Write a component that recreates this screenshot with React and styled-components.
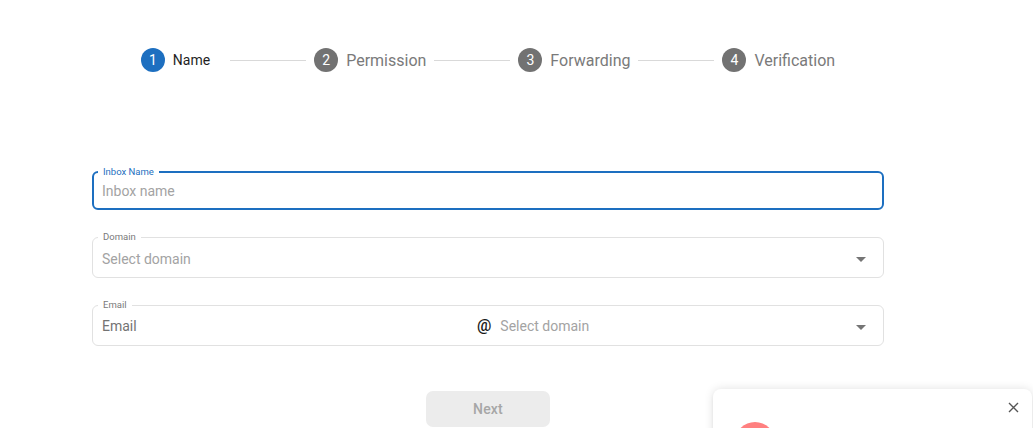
import React from "react";
import styled, { createGlobalStyle } from "styled-components";

const Global = createGlobalStyle`
  html, body { margin: 0; padding: 0; background: #fff; }
  body { font-family: Roboto, "Noto Sans", Arial, sans-serif; overflow: hidden; }
  * { box-sizing: border-box; }
`;

const Page = styled.div`
  width: 1033px;
  height: 428px;
  padding: 48px 0 0 92px;
`;

const Content = styled.div`
  width: 792px;
  display: flex;
  flex-direction: column;
  align-items: center;
`;

const Stepper = styled.div`
  display: flex;
  align-items: center;
  height: 24px;
`;

const Step = styled.div`
  display: flex;
  align-items: center;
  gap: 8px;
`;

const StepIcon = styled.div`
  width: 24px;
  height: 24px;
  border-radius: 50%;
  background: ${(p) => (p.$active ? "#1d6fc0" : "#727272")};
  color: #fff;
  font-size: 14px;
  display: flex;
  align-items: center;
  justify-content: center;
  line-height: 1;
`;

const StepLabel = styled.span`
  font-size: ${(p) => (p.$active ? "14px" : "16px")};
  color: ${(p) => (p.$active ? "#1f1f1f" : "#7a7a7a")};
  padding-right: ${(p) => (p.$active ? "12px" : "0")};
`;

const Connector = styled.div`
  width: 76px;
  height: 1px;
  background: #d9d9d9;
  margin: 0 8px;
`;

const Form = styled.div`
  width: 100%;
  margin-top: 99px;
  display: flex;
  flex-direction: column;
  gap: 27px;
`;

const Field = styled.div`
  position: relative;
  height: ${(p) => (p.$focused ? "39px" : "41px")};
  border: ${(p) => (p.$focused ? "2px solid #1d6fc0" : "1px solid #e1e1e1")};
  border-radius: 6px;
  display: flex;
  align-items: center;
  padding: 0 ${(p) => (p.$focused ? "8px" : "9px")};
`;

const Legend = styled.span`
  position: absolute;
  top: -7px;
  left: ${(p) => (p.$focused ? "4px" : "5px")};
  padding: 0 5px;
  background: #fff;
  font-size: 9.5px;
  line-height: 12px;
  color: ${(p) => (p.$focused ? "#1d6fc0" : "#7a7a7a")};
`;

const Placeholder = styled.span`
  flex: 1;
  font-size: 14px;
  color: ${(p) => (p.$dark ? "#737373" : "#a3a3a3")};
  padding-top: ${(p) => (p.$offset ? "2px" : "1px")};
`;

const Half = styled.div`
  display: flex;
  align-items: center;
  height: 100%;
  width: ${(p) => (p.$left ? "375px" : "auto")};
  flex: ${(p) => (p.$left ? "none" : "1")};
`;

const At = styled.span`
  font-size: 16px;
  color: #1a1a1a;
  margin-right: 9px;
  margin-left: 0;
  font-weight: 500;
`;

const Caret = styled.span`
  width: 0;
  height: 0;
  border-left: 5px solid transparent;
  border-right: 5px solid transparent;
  border-top: 5px solid #757575;
  margin-right: 8px;
  margin-top: 3px;
`;

const Button = styled.button`
  margin-top: 45px;
  width: 124px;
  height: 36px;
  border: none;
  border-radius: 7px;
  background: #ececec;
  color: #a6a6a6;
  font-family: Roboto, Arial, sans-serif;
  font-size: 14px;
  font-weight: 500;
  letter-spacing: 0.2px;
`;

const Toast = styled.div`
  position: fixed;
  left: 713px;
  top: 389px;
  width: 319px;
  height: 120px;
  background: #fff;
  border-radius: 8px;
  box-shadow: 0 0 10px rgba(0, 0, 0, 0.12), 0 2px 4px rgba(0, 0, 0, 0.06);
  padding: 33px 0 0 22px;
`;

const Close = styled.button`
  position: absolute;
  top: 10px;
  right: 11px;
  width: 16px;
  height: 16px;
  padding: 0;
  border: none;
  background: none;
  display: flex;
  align-items: center;
  justify-content: center;
`;

const ErrorDot = styled.div`
  width: 40px;
  height: 40px;
  border-radius: 50%;
  background: #ff8080;
`;

const steps = ["Name", "Permission", "Forwarding", "Verification"];

export default function App() {
  return (
    <Page>
      <Global />
      <Content>
        <Stepper>
          {steps.map((s, i) => (
            <React.Fragment key={s}>
              {i > 0 && <Connector />}
              <Step>
                <StepIcon $active={i === 0}>{i + 1}</StepIcon>
                <StepLabel $active={i === 0}>{s}</StepLabel>
              </Step>
            </React.Fragment>
          ))}
        </Stepper>
        <Form>
          <Field $focused>
            <Legend $focused>Inbox Name</Legend>
            <Placeholder>Inbox name</Placeholder>
          </Field>
          <Field>
            <Legend>Domain</Legend>
            <Placeholder $offset>Select domain</Placeholder>
            <Caret />
          </Field>
          <Field>
            <Legend>Email</Legend>
            <Half $left>
              <Placeholder $dark>Email</Placeholder>
            </Half>
            <Half>
              <At>@</At>
              <Placeholder>Select domain</Placeholder>
              <Caret />
            </Half>
          </Field>
        </Form>
        <Button disabled>Next</Button>
      </Content>
      <Toast>
        <Close aria-label="close">
          <svg width="11" height="11" viewBox="0 0 11 11">
            <path d="M1 1 L10 10 M10 1 L1 10" stroke="#555" strokeWidth="1.4" />
          </svg>
        </Close>
        <ErrorDot />
      </Toast>
    </Page>
  );
}
